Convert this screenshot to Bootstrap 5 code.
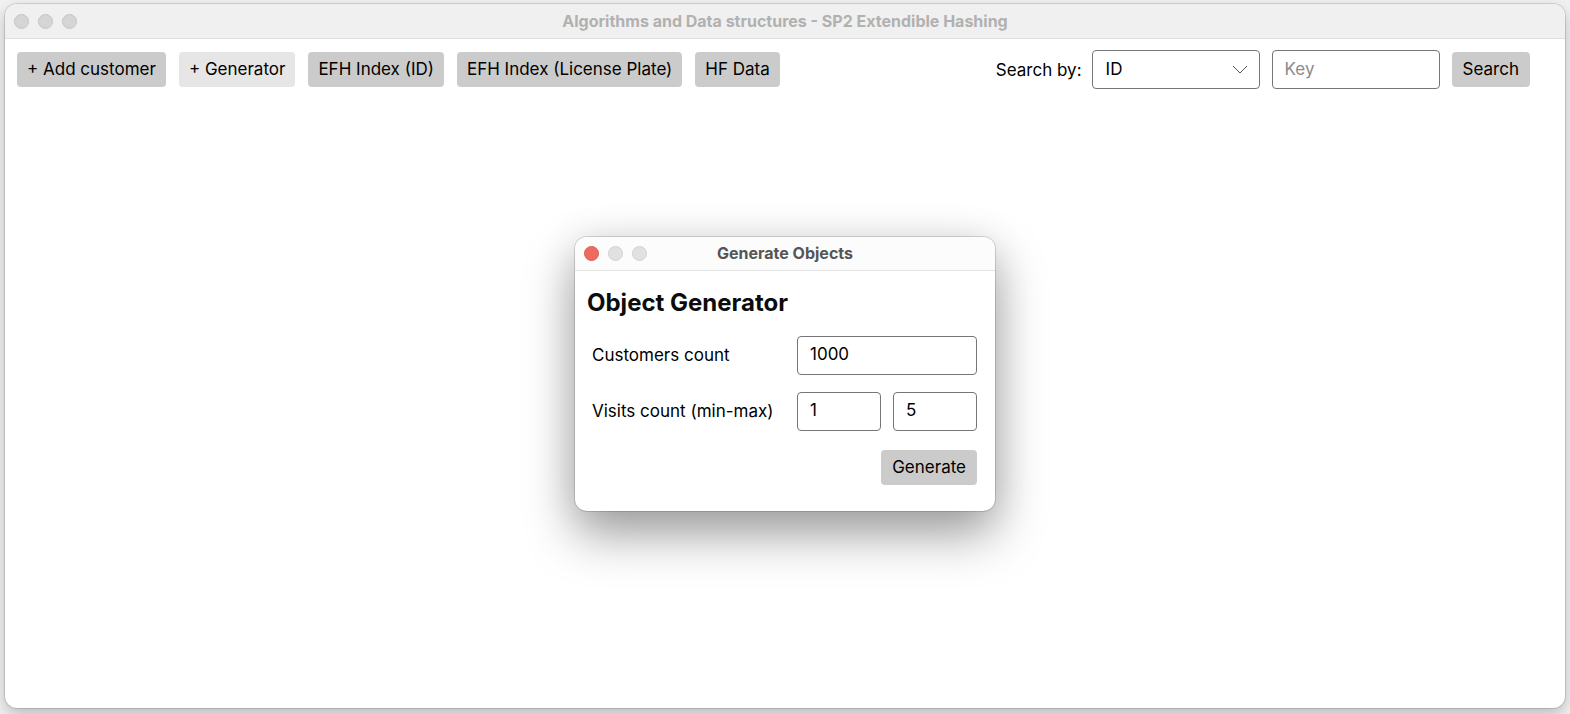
<!DOCTYPE html>
<html lang="en">
<head>
<meta charset="utf-8">
<meta name="viewport" content="width=device-width, initial-scale=1">
<title>Algorithms and Data structures - SP2 Extendible Hashing</title>
<link href="https://cdn.jsdelivr.net/npm/bootstrap@5.3.0/dist/css/bootstrap.min.css" rel="stylesheet">
<style>
  body {
    font-family: Inter, "Liberation Sans", sans-serif;
    font-size: 17px;
    line-height: 24px;
    color: #000;
    background: #f2f2f2;
    padding: 4px 5px 6px;
  }
  .app-window {
    background: #fff;
    border-radius: 12px;
    box-shadow: 0 0 0 1px rgba(0, 0, 0, .12), 0 6px 16px rgba(0, 0, 0, .24);
  }
  .title-bar {
    height: 35px;
    background: #f0f0f0;
    border-bottom: 1px solid #dedede;
    border-radius: 12px 12px 0 0;
    color: #b1b1b1;
    font-size: 16px;
    font-weight: 700;
    padding: 0 9px;
  }
  .title-bar h1, .title-bar h2 { font-size: inherit; font-weight: inherit; line-height: 24px; }
  .light { width: 15px; height: 15px; border-radius: 50%; background: #d5d5d5; border: 1px solid #c6c6c6; }
  .lights { gap: 9px; width: 80px; }
  .toolbar { padding: 11px 35px 11px 12px; gap: 12px; }
  .tool-buttons { gap: 13px; }
  .tool-buttons .btn-flat { --bs-btn-padding-x: 10px; }
  .search-form { gap: 12px; }
  .search-group { gap: 10px; }
  .btn-flat {
    --bs-btn-padding-x: 11px;
    --bs-btn-padding-y: 5px;
    --bs-btn-font-size: 17px;
    --bs-btn-line-height: 25px;
    --bs-btn-border-width: 0;
    --bs-btn-border-radius: 4px;
    --bs-btn-bg: #cbcbcb;
    --bs-btn-color: #000;
    --bs-btn-hover-bg: #e6e6e6;
    --bs-btn-hover-color: #000;
    --bs-btn-active-bg: #b8b8b8;
    white-space: nowrap;
  }
  .btn-flat.is-hot { --bs-btn-bg: #e6e6e6; }
  .field.form-control, .field.form-select {
    height: 39px;
    padding: 5px 12px 7px;
    font-size: 17px;
    line-height: 25px;
    color: #000;
    border: 1px solid #767676;
    border-radius: 4px;
  }
  .field::placeholder { color: #8b8b8b; }
  .search-field { width: 168px; }
  .field.form-select {
    padding: 6px 13px;
    background-image: url("data:image/svg+xml,%3Csvg xmlns='http://www.w3.org/2000/svg' viewBox='0 0 16 16'%3E%3Cpath fill='none' stroke='%23555' d='M1 4l7 7 7-7'/%3E%3C/svg%3E");
    background-size: 16px 16px;
    background-position: right 11px center;
  }
  .dialog-layer { pointer-events: none; }
  .dialog-window {
    pointer-events: auto;
    width: 420px;
    background: #fff;
    border-radius: 12px;
    box-shadow: 0 0 0 1px rgba(0, 0, 0, .14), 0 23px 50px rgba(0, 0, 0, .38), 0 0 38px rgba(0, 0, 0, .08);
  }
  .dialog-window .title-bar { height: 34px; background: #fcfcfc; border-color: #e2e2e2; color: #555; }
  .dialog-window .light { background: #e1e1e1; border-color: #d2d2d2; }
  .dialog-window .light-close { background: #ec6a5e; border-color: #dc5d52; }
  .dialog-body { padding: 16px 18px 26px 12px; }
  .dialog-heading { font-size: 24px; font-weight: 700; line-height: 32px; margin-bottom: 17px; color: #0c0c0c; }
  .form-lines { gap: 17px; margin-bottom: 19px; padding-left: 5px; }
  .inputs { width: 180px; gap: 12px; }
</style>
</head>
<body class="min-vh-100 d-flex flex-column">
<div class="app-window flex-grow-1 d-flex flex-column">
  <header class="title-bar d-flex align-items-center">
    <div class="lights d-flex"><span class="light"></span><span class="light"></span><span class="light"></span></div>
    <h1 class="flex-grow-1 text-center m-0">Algorithms and Data structures - SP2 Extendible Hashing</h1>
    <div class="lights"></div>
  </header>
  <main class="flex-grow-1 position-relative">
    <div class="toolbar d-flex flex-wrap align-items-center justify-content-between">
      <div class="tool-buttons d-flex flex-wrap">
        <button type="button" class="btn btn-flat">+ Add customer</button>
        <button type="button" class="btn btn-flat is-hot">+ Generator</button>
        <button type="button" class="btn btn-flat">EFH Index (ID)</button>
        <button type="button" class="btn btn-flat">EFH Index (License Plate)</button>
        <button type="button" class="btn btn-flat">HF Data</button>
      </div>
      <form class="search-form d-flex flex-wrap align-items-center">
        <div class="search-group d-flex align-items-center">
          <label for="search-by">Search by:</label>
          <select id="search-by" class="field search-field form-select">
            <option>ID</option>
            <option>License Plate</option>
          </select>
        </div>
        <input type="text" class="field search-field form-control" placeholder="Key" aria-label="Key">
        <button type="button" class="btn btn-flat">Search</button>
      </form>
    </div>
    <div class="dialog-layer position-absolute top-0 start-0 w-100 h-100 d-flex align-items-center justify-content-center">
      <section class="dialog-window" role="dialog" aria-labelledby="dialog-title">
        <header class="title-bar d-flex align-items-center">
          <div class="lights d-flex"><span class="light light-close"></span><span class="light"></span><span class="light"></span></div>
          <h2 id="dialog-title" class="flex-grow-1 text-center m-0">Generate Objects</h2>
          <div class="lights"></div>
        </header>
        <form class="dialog-body">
          <h3 class="dialog-heading">Object Generator</h3>
          <div class="form-lines d-flex flex-column">
            <div class="d-flex align-items-center justify-content-between">
              <label for="customers">Customers count</label>
              <div class="inputs d-flex"><input id="customers" type="text" class="field form-control" value="1000"></div>
            </div>
            <div class="d-flex align-items-center justify-content-between">
              <label for="visits-min">Visits count (min-max)</label>
              <div class="inputs d-flex">
                <input id="visits-min" type="text" class="field form-control" value="1">
                <input type="text" class="field form-control" value="5" aria-label="Visits count maximum">
              </div>
            </div>
          </div>
          <div class="d-flex justify-content-end"><button type="button" class="btn btn-flat">Generate</button></div>
        </form>
      </section>
    </div>
  </main>
</div>
<script src="https://cdn.jsdelivr.net/npm/bootstrap@5.3.0/dist/js/bootstrap.bundle.min.js"></script>
</body>
</html>
